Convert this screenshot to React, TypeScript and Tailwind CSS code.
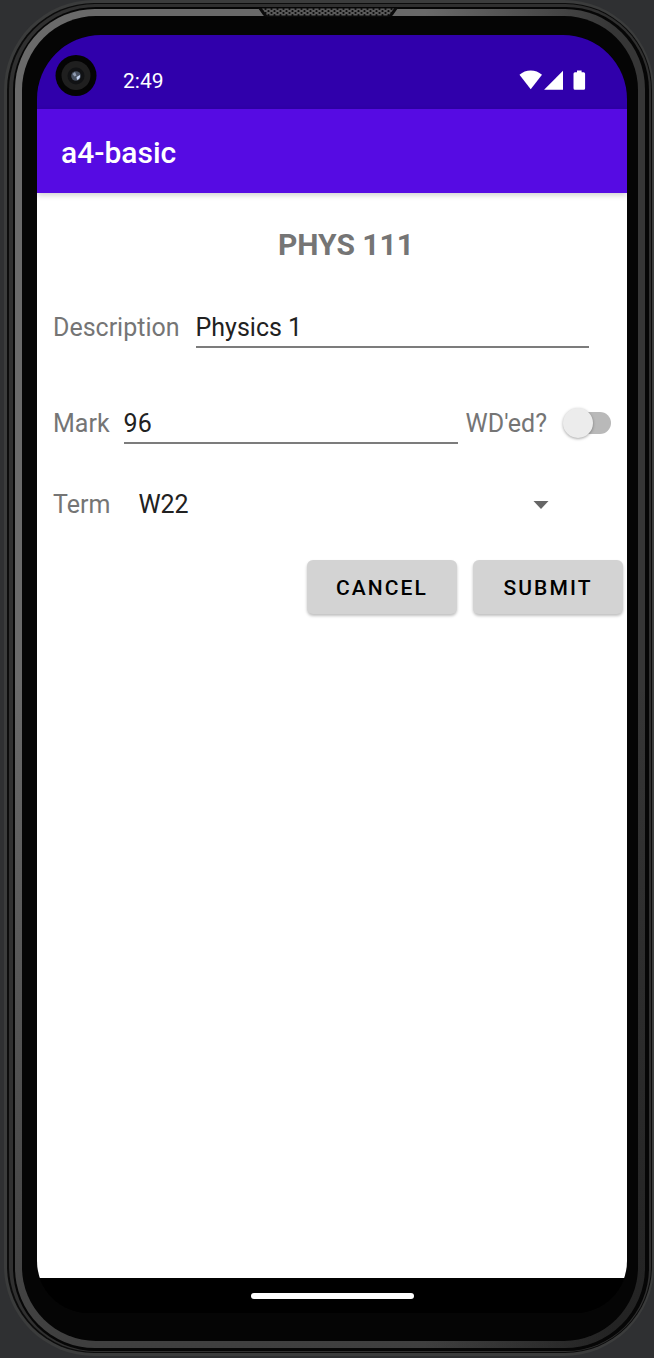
import { useState } from "react";
import type { ReactNode } from "react";

function Speaker() {
  return (
    <svg viewBox="0 0 140 9" className="absolute top-2 left-1/2 h-[9px] w-[140px] -translate-x-[71px]" aria-hidden="true">
      <defs>
        <pattern id="mesh" width="6" height="4" patternUnits="userSpaceOnUse">
          <rect width="6" height="4" fill="#5a5a5a" />
          <circle cx="1.5" cy="1" r="1.1" fill="#0c0c0c" />
          <circle cx="4.5" cy="3" r="1.1" fill="#0c0c0c" />
        </pattern>
      </defs>
      <path d="M0 0H140L135 7Q134 9 131 9H9Q6 9 5 7Z" fill="#0b0b0b" />
      <path d="M4 0.5H136L132 6Q131 7.5 129 7.5H11Q9 7.5 8 6Z" fill="url(#mesh)" />
    </svg>
  );
}

function Camera() {
  return (
    <svg viewBox="0 0 42 42" className="size-[42px]" aria-hidden="true">
      <circle cx="21" cy="20.500" r="20.500" fill="#040404" />
      <circle cx="21" cy="20.500" r="14.5" fill="#1f1f1f" />
      <circle cx="21" cy="21" r="8.500" fill="#111214" />
      <circle cx="21" cy="21" r="4.800" fill="#47505f" />
      <path d="M17.500 19L20 17L21.500 20.500L19.500 21.500Z" fill="#8f9bb0" />
      <path d="M21.500 22L25 20Q25.500 24 22 25Z" fill="#c3d2ee" />
    </svg>
  );
}

function StatusIcons() {
  return (
    <svg viewBox="0 0 68 22" className="h-[22px] w-[68px]" fill="#fff" aria-hidden="true">
      <path d="M0.500 5.800Q5.300 1.500 11.700 1.500T23 5.800L11.700 20.200Z" />
      <path d="M44 1.800V20.700H25.100Z" />
      <path d="M58 1.500h4.600v1.800h2q1.500 0 1.500 1.500v14.400q0 1.500-1.500 1.500h-8.600q-1.500 0-1.500-1.500V4.800q0-1.500 1.500-1.500h2z" />
    </svg>
  );
}

function PhoneFrame({ children }: { children: ReactNode }) {
  return (
    <div className="flex min-h-screen flex-col overflow-hidden bg-[#2f3032] pb-0.5 pl-1">
      <div className="relative flex grow flex-col rounded-[90px] bg-[#3b3c3c] pt-[3px] pr-0.5 pb-[3px] pl-[3px]">
        <div className="flex grow flex-col rounded-[87px] bg-[#0c0c0c] pt-px pr-px pb-px pl-0.5">
          <div className="flex grow flex-col rounded-[86px] bg-[#303030] pt-[3px] pr-0.5 pb-px pl-1">
            <div className="flex grow flex-col rounded-[83px] bg-[#060606] pt-0.5 pr-1 pb-[3px] pl-0.5">
              <div className="flex grow flex-col rounded-[80px] bg-[linear-gradient(to_bottom,transparent_50%,rgba(10,10,10,0.45)),linear-gradient(to_right,#6a6a6a_65%,#363636_95%)] p-[7px]">
                <div className="flex grow flex-col rounded-[74px] bg-[#050505] pt-[19px] pr-[11px] pb-7 pl-[15px]">
                  {children}
                </div>
              </div>
            </div>
          </div>
        </div>
        <Speaker />
      </div>
    </div>
  );
}

const buttonClass =
  "h-[54px] w-[150px] rounded-md bg-[#d3d3d3] pt-1 text-[21px] font-medium tracking-widest text-black shadow-[0_2px_3px_rgba(0,0,0,0.25)]";
const labelClass = "pt-0.5";
const fieldClass =
  "h-[42px] min-w-0 grow border-b-2 border-[#7c7c7c] bg-transparent pt-0.5 text-[#212121] outline-none";

export default function App() {
  const [description, setDescription] = useState("Physics 1");
  const [mark, setMark] = useState("96");
  const [withdrawn, setWithdrawn] = useState(false);
  const [term, setTerm] = useState("W22");

  return (
    <PhoneFrame>
      <div className="flex grow flex-col overflow-hidden rounded-t-[64px] rounded-b-[52px] bg-black font-['Roboto',sans-serif]">
        <div className="flex h-[74px] items-center bg-[#3000ab] pt-2 pr-10 pl-[18px] text-white">
          <Camera />
          <div className="flex grow items-center justify-between pt-2 pl-[26px]">
            <span className="pt-0.5 text-[21px] leading-6">2:49</span>
            <StatusIcons />
          </div>
        </div>
        <header className="relative flex h-[84px] items-center bg-[#560be3] px-6 pt-1 text-white shadow-[0_2px_6px_rgba(0,0,0,0.2)]">
          <h1 className="text-[30px] leading-9 font-medium">a4-basic</h1>
        </header>

        <main className="grow bg-white pt-8 text-[25px] text-[#757575]">
          <h2 className="pl-7 text-center text-[30px] leading-10 font-bold">PHYS 111</h2>
          <form onSubmit={(e) => e.preventDefault()} className="pt-[41px]">
            <div className="flex items-center gap-4 pr-[38px] pl-4">
              <label htmlFor="description" className={labelClass}>Description</label>
              <input
                id="description"
                value={description}
                onChange={(e) => setDescription(e.target.value)}
                className={fieldClass}
              />
            </div>

            <div className="mt-[54px] flex items-center px-4">
              <label htmlFor="mark" className={labelClass}>Mark</label>
              <input id="mark" value={mark} onChange={(e) => setMark(e.target.value)} className={`${fieldClass} mr-2 ml-3.5`} />
              <label htmlFor="withdrawn" className={`${labelClass} mr-4`}>WD'ed?</label>
              <input
                id="withdrawn"
                type="checkbox"
                role="switch"
                checked={withdrawn}
                onChange={(e) => setWithdrawn(e.target.checked)}
                className="relative h-[30px] w-12 shrink-0 appearance-none before:absolute before:top-1 before:right-0 before:h-[22px] before:w-11 before:rounded-full before:bg-[#b9b9b9] after:absolute after:top-0 after:left-0 after:size-[30px] after:rounded-full after:bg-[#ececec] after:shadow-[0_1px_3px_rgba(0,0,0,0.35)] checked:after:left-[18px]"
              />
            </div>

            <div className="mt-10 flex items-center pr-[62px] pl-4">
              <label htmlFor="term" className="mr-7">Term</label>
              <div className="relative flex grow items-center">
                <select
                  id="term"
                  value={term}
                  onChange={(e) => setTerm(e.target.value)}
                  className="h-[42px] grow appearance-none bg-transparent pr-[38px] text-[#212121] outline-none"
                >
                  <option>W22</option>
                  <option>S22</option>
                  <option>F22</option>
                </select>
                <svg viewBox="0 0 16 8" className="pointer-events-none absolute right-4 h-2 w-4" fill="#666" aria-hidden="true">
                  <path d="M0.500 0H15.500L8 8Z" />
                </svg>
              </div>
            </div>

            <div className="mt-[34px] flex justify-end gap-4 pr-1">
              <button type="button" className={buttonClass}>CANCEL</button>
              <button type="submit" className={buttonClass}>SUBMIT</button>
            </div>
          </form>
        </main>

        <div className="flex h-[35px] items-center justify-center bg-black">
          <div className="h-1.5 w-[163px] rounded-full bg-white" />
        </div>
      </div>
    </PhoneFrame>
  );
}
